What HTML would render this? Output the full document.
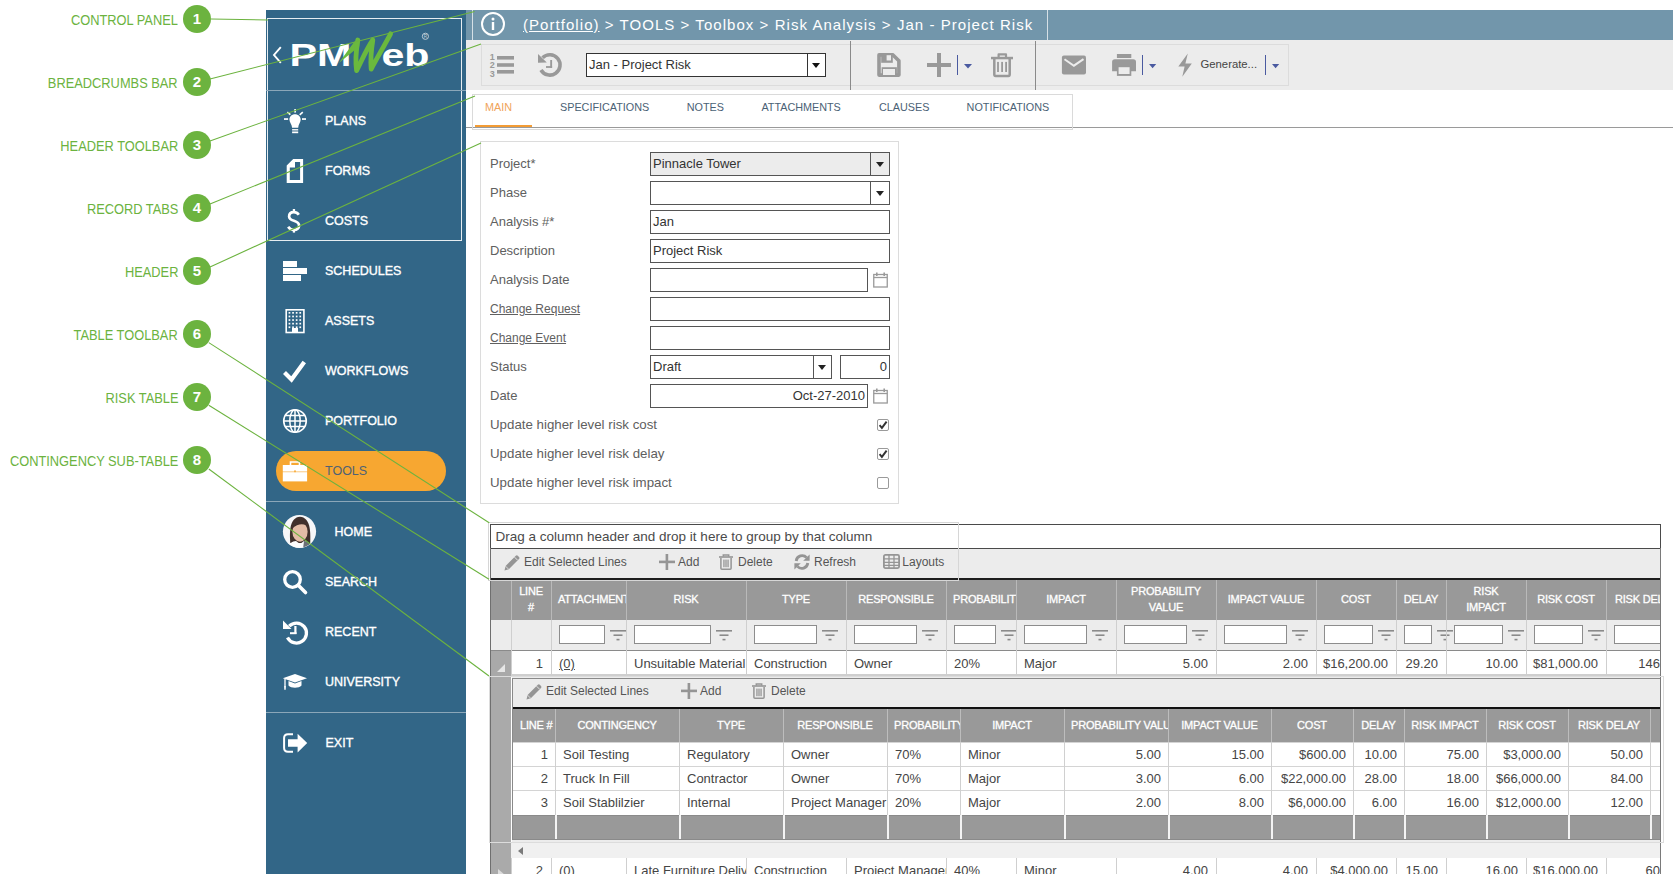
<!DOCTYPE html><html><head><meta charset="utf-8"><style>

*{box-sizing:border-box;margin:0;padding:0}
html,body{width:1676px;height:877px;overflow:hidden;background:#fff;font-family:"Liberation Sans", sans-serif;}
.a{position:absolute}
.lbl{position:absolute;right:1498px;font-size:14.5px;color:#6cb33f;white-space:nowrap;transform:scaleX(.885);transform-origin:right center;line-height:16px}
.num{position:absolute;width:28px;height:28px;border-radius:50%;background:#6cb33f;color:#fff;font-weight:bold;font-size:15px;text-align:center;line-height:28px}
.sb{position:absolute;left:266px;top:10px;width:200px;height:864px;background:#326687}
.mi{position:absolute;left:325px;font-weight:normal;font-size:12.5px;color:#fff;-webkit-text-stroke:0.35px #fff;white-space:nowrap;line-height:14px}
.ic{position:absolute}
.fld{border:1px solid #555;font-size:13px;line-height:22px;color:#333;white-space:nowrap;overflow:hidden}
.ph{color:#fff;font-weight:normal;font-size:11px;letter-spacing:-0.2px;-webkit-text-stroke:0.3px #fff;text-align:center;white-space:nowrap;overflow:hidden;padding:0 7px}
.pc{font-size:13px;color:#454545;white-space:nowrap;overflow:hidden}

</style></head><body>
<div class="sb"></div>
<div class="a" style="left:267px;top:18px;width:195px;height:223px;border:1px solid #e6edf1"></div>
<div class="a" style="left:266px;top:90px;width:200px;height:1px;background:#8ba7b9"></div>
<div class="a" style="left:266px;top:501px;width:200px;height:1px;background:#8ba7b9"></div>
<div class="a" style="left:266px;top:712px;width:200px;height:1px;background:#8ba7b9"></div>
<svg class="a" style="left:266px;top:28px" width="180" height="50" viewBox="0 0 180 50">
<path d="M14.8 19.2 L8 27 L14.8 34.8" fill="none" stroke="#fff" stroke-width="1.9"/>
<text x="23.5" y="37.5" font-family="Liberation Sans" font-weight="bold" font-size="31" fill="#fff" textLength="62" lengthAdjust="spacingAndGlyphs">PM</text>
<text x="115.5" y="37.5" font-family="Liberation Sans" font-weight="bold" font-size="31" fill="#fff" textLength="48" lengthAdjust="spacingAndGlyphs">eb</text>
<path d="M72.6 35.2 L88.5 13.5 L93.5 11 L93.2 18.5 Z" fill="#6ab93e"/>
<path d="M91.8 12 C90.2 22 89.2 34 90.6 42.6 C95 34 101 20 106.8 12 C105.2 22 104.4 32 105.2 41 C110 32 118 18 124.6 5.8" fill="none" stroke="#6ab93e" stroke-width="4.8" stroke-linejoin="round" stroke-linecap="round"/>
<circle cx="159.4" cy="8.3" r="3.1" fill="none" stroke="#c9d5dd" stroke-width="0.9"/>
<text x="157.8" y="10" font-family="Liberation Sans" font-size="4.5" fill="#c9d5dd">R</text>
</svg>
<div class="mi" style="top:114.0px">PLANS</div>
<div class="mi" style="top:164.0px">FORMS</div>
<div class="mi" style="top:214.0px">COSTS</div>
<div class="mi" style="top:264.0px">SCHEDULES</div>
<div class="mi" style="top:314.0px">ASSETS</div>
<div class="mi" style="top:364.0px">WORKFLOWS</div>
<div class="mi" style="top:414.0px">PORTFOLIO</div>
<div class="a" style="left:276px;top:451px;width:170px;height:40px;border-radius:20px;background:#f7a731"></div>
<div class="mi" style="top:464px;font-weight:normal;color:#4e6275;-webkit-text-stroke:0">TOOLS</div>
<div class="mi" style="left:334.5px;top:524.5px">HOME</div>
<div class="mi" style="left:325px;top:574.5px">SEARCH</div>
<div class="mi" style="left:325px;top:624.5px">RECENT</div>
<div class="mi" style="left:325px;top:674.5px">UNIVERSITY</div>
<div class="mi" style="left:325.5px;top:735.5px">EXIT</div>
<div class="a" style="left:466px;top:10px;width:1207px;height:30px;background:#7296ab"></div>
<div class="a" style="left:472px;top:10px;width:1px;height:30px;background:#d6e0e6"></div>
<div class="a" style="left:1047px;top:10px;width:1px;height:30px;background:#d6e0e6"></div>
<svg class="a" style="left:480px;top:11px" width="26" height="26" viewBox="0 0 26 26"><circle cx="13" cy="13" r="11" fill="none" stroke="#fff" stroke-width="2"/><circle cx="13" cy="8" r="1.5" fill="#fff"/><rect x="11.8" y="11" width="2.4" height="8" fill="#fff"/></svg>
<div class="a" style="left:523px;top:16px;font-size:15px;letter-spacing:1.05px;color:#fff;white-space:nowrap;line-height:18px"><span style="text-decoration:underline">(Portfolio)</span> &gt; TOOLS &gt; Toolbox &gt; Risk Analysis &gt; Jan - Project Risk</div>
<div class="a" style="left:466px;top:40px;width:1207px;height:50px;background:#ececec"></div>
<div class="a" style="left:481px;top:44px;width:808px;height:42px;border:1px solid #dcdcdc"></div>
<div class="a" style="left:850px;top:41px;width:1px;height:49px;background:#8a8a8a"></div>
<div class="a" style="left:1035px;top:41px;width:1px;height:49px;background:#8a8a8a"></div>
<div class="a" style="left:466px;top:127px;width:1207px;height:1px;background:#9a9a9a"></div>
<div class="a" style="left:472px;top:94px;width:601px;height:36px;border:1px solid #dadada"></div>
<div class="a" style="left:475px;top:124.5px;width:57px;height:2.5px;background:#f39c35"></div>
<div class="a" style="left:485px;top:101px;font-size:10.8px;color:#f0a45a;white-space:nowrap;line-height:13px">MAIN</div>
<div class="a" style="left:560px;top:101px;font-size:10.8px;color:#4a6175;white-space:nowrap;line-height:13px">SPECIFICATIONS</div>
<div class="a" style="left:686.8px;top:101px;font-size:10.8px;color:#4a6175;white-space:nowrap;line-height:13px">NOTES</div>
<div class="a" style="left:761.4px;top:101px;font-size:10.8px;color:#4a6175;white-space:nowrap;line-height:13px">ATTACHMENTS</div>
<div class="a" style="left:879px;top:101px;font-size:10.8px;color:#4a6175;white-space:nowrap;line-height:13px">CLAUSES</div>
<div class="a" style="left:966.6px;top:101px;font-size:10.8px;color:#4a6175;white-space:nowrap;line-height:13px">NOTIFICATIONS</div>
<div class="a" style="left:480px;top:141px;width:419px;height:363px;border:1px solid #dcdcdc"></div>
<div class="a" style="left:490px;top:152px;height:24px;line-height:24px;font-size:13px;color:#606060;white-space:nowrap">Project*</div>
<div class="a" style="left:490px;top:181px;height:24px;line-height:24px;font-size:13px;color:#606060;white-space:nowrap">Phase</div>
<div class="a" style="left:490px;top:210px;height:24px;line-height:24px;font-size:13px;color:#606060;white-space:nowrap">Analysis #*</div>
<div class="a" style="left:490px;top:239px;height:24px;line-height:24px;font-size:13px;color:#606060;white-space:nowrap">Description</div>
<div class="a" style="left:490px;top:268px;height:24px;line-height:24px;font-size:13px;color:#606060;white-space:nowrap">Analysis Date</div>
<div class="a" style="left:490px;top:297px;height:24px;line-height:24px;font-size:12px;color:#606060;text-decoration:underline;white-space:nowrap">Change Request</div>
<div class="a" style="left:490px;top:326px;height:24px;line-height:24px;font-size:12px;color:#606060;text-decoration:underline;white-space:nowrap">Change Event</div>
<div class="a" style="left:490px;top:355px;height:24px;line-height:24px;font-size:13px;color:#606060;white-space:nowrap">Status</div>
<div class="a" style="left:490px;top:384px;height:24px;line-height:24px;font-size:13px;color:#606060;white-space:nowrap">Date</div>
<div class="a" style="left:490px;top:413px;height:24px;line-height:24px;font-size:13.3px;color:#606060;white-space:nowrap">Update higher level risk cost</div>
<div class="a" style="left:490px;top:442px;height:24px;line-height:24px;font-size:13.3px;color:#606060;white-space:nowrap">Update higher level risk delay</div>
<div class="a" style="left:490px;top:471px;height:24px;line-height:24px;font-size:13.3px;color:#606060;white-space:nowrap">Update higher level risk impact</div>
<div class="a fld" style="left:650px;top:152px;width:240px;height:24px;background:#ececec;padding-left:2px">Pinnacle Tower</div>
<div class="a" style="left:870px;top:152px;width:1px;height:24px;background:#555"></div>
<div class="a" style="left:875.5px;top:162px;width:0;height:0;border-left:4.5px solid transparent;border-right:4.5px solid transparent;border-top:5px solid #222"></div>
<div class="a fld" style="left:650px;top:181px;width:240px;height:24px;background:#fff;padding-left:2px"></div>
<div class="a" style="left:870px;top:181px;width:1px;height:24px;background:#555"></div>
<div class="a" style="left:875.5px;top:191px;width:0;height:0;border-left:4.5px solid transparent;border-right:4.5px solid transparent;border-top:5px solid #222"></div>
<div class="a fld" style="left:650px;top:210px;width:240px;height:24px;background:#fff;padding-left:2px">Jan</div>
<div class="a fld" style="left:650px;top:239px;width:240px;height:24px;background:#fff;padding-left:2px">Project Risk</div>
<div class="a fld" style="left:650px;top:268px;width:218px;height:24px;background:#fff;padding-left:2px"></div>
<svg class="a" style="left:873px;top:272px" width="15" height="16" viewBox="0 0 15 16"><rect x="0.75" y="2.5" width="13.5" height="12.5" fill="none" stroke="#9a9a9a" stroke-width="1.3"/><line x1="0.75" y1="5.5" x2="14.25" y2="5.5" stroke="#9a9a9a" stroke-width="1.3"/><rect x="3" y="0.5" width="1.6" height="3.5" fill="#9a9a9a"/><rect x="10.4" y="0.5" width="1.6" height="3.5" fill="#9a9a9a"/></svg>
<div class="a fld" style="left:650px;top:297px;width:240px;height:24px;background:#fff;padding-left:2px"></div>
<div class="a fld" style="left:650px;top:326px;width:240px;height:24px;background:#fff;padding-left:2px"></div>
<div class="a fld" style="left:650px;top:355px;width:182px;height:24px;background:#fff;padding-left:2px">Draft</div>
<div class="a" style="left:812.5px;top:355px;width:1px;height:24px;background:#555"></div>
<div class="a" style="left:817.75px;top:365px;width:0;height:0;border-left:4.5px solid transparent;border-right:4.5px solid transparent;border-top:5px solid #222"></div>
<div class="a fld" style="left:840px;top:355px;width:50px;height:24px;background:#fff;padding-right:2px;text-align:right">0</div>
<div class="a fld" style="left:650px;top:384px;width:218px;height:24px;background:#fff;padding-right:2px;text-align:right">Oct-27-2010</div>
<svg class="a" style="left:873px;top:388px" width="15" height="16" viewBox="0 0 15 16"><rect x="0.75" y="2.5" width="13.5" height="12.5" fill="none" stroke="#9a9a9a" stroke-width="1.3"/><line x1="0.75" y1="5.5" x2="14.25" y2="5.5" stroke="#9a9a9a" stroke-width="1.3"/><rect x="3" y="0.5" width="1.6" height="3.5" fill="#9a9a9a"/><rect x="10.4" y="0.5" width="1.6" height="3.5" fill="#9a9a9a"/></svg>
<div class="a" style="left:877px;top:419px;width:12px;height:12px;border:1px solid #9a9a9a;border-radius:2px;background:#fff"></div>
<svg class="a" style="left:877px;top:419px" width="12" height="12" viewBox="0 0 12 12"><path d="M2.6 6.2 L4.9 8.9 L9.6 2.6" fill="none" stroke="#333" stroke-width="1.9"/></svg>
<div class="a" style="left:877px;top:448px;width:12px;height:12px;border:1px solid #9a9a9a;border-radius:2px;background:#fff"></div>
<svg class="a" style="left:877px;top:448px" width="12" height="12" viewBox="0 0 12 12"><path d="M2.6 6.2 L4.9 8.9 L9.6 2.6" fill="none" stroke="#333" stroke-width="1.9"/></svg>
<div class="a" style="left:877px;top:477px;width:12px;height:12px;border:1px solid #9a9a9a;border-radius:2px;background:#fff"></div>
<div class="a" style="left:490px;top:523px;width:1171px;height:351px;overflow:hidden">
<div class="a" style="left:0;top:1px;width:1171px;height:25px;border:1px solid #4a4a4a;background:#fff"></div>
<div class="a" style="left:5.5px;top:1.5px;height:24px;line-height:24px;font-size:13.5px;color:#4a4a4a;white-space:nowrap">Drag a column header and drop it here to group by that column</div>
<div class="a" style="left:0;top:25.5px;width:1171px;height:30px;background:#ececec;border-left:1px solid #777;border-right:1px solid #777"></div>
<div class="a" style="left:0;top:55px;width:1171px;height:2px;background:#1e1e1e"></div>
<div class="a" style="left:0;top:57px;width:1171px;height:40px;background:#999"></div>
<div class="a" style="left:0;top:97px;width:1171px;height:31px;background:#ececec;border-bottom:1px solid #8a8a8a"></div>
<div class="a" style="left:0;top:128px;width:1171px;height:25px;background:#fff;border-bottom:2px solid #cfcfcf"></div>
<div class="a" style="left:0;top:153px;width:1171px;height:182px;background:#fff"></div>
<div class="a" style="left:0;top:335px;width:1171px;height:24px;background:#fff"></div>
<div class="a" style="left:0;top:128px;width:21px;height:25px;background:#a9a9a9"></div>
<div class="a" style="left:0;top:153px;width:21px;height:182px;background:#aaa"></div>
<div class="a" style="left:0;top:335px;width:21px;height:24px;background:#aaa"></div>
<svg class="a" style="left:6px;top:140px" width="10" height="10"><path d="M9 1 L9 9 L1 9 Z" fill="#e6e6e6"/></svg>
<svg class="a" style="left:7px;top:345px" width="10" height="12"><path d="M1 1 L8 7 L1 12 Z" fill="#dcdcdc"/></svg>
<div class="a" style="left:0;top:25px;width:1px;height:330px;background:#6f6f6f"></div>
<div class="a" style="left:21px;top:57px;width:1px;height:40px;background:#b9b9b9"></div>
<div class="a" style="left:21px;top:97px;width:1px;height:31px;background:#cfcfcf"></div>
<div class="a" style="left:21px;top:128px;width:1px;height:25px;background:#cfcfcf"></div>
<div class="a" style="left:21px;top:335px;width:1px;height:24px;background:#cfcfcf"></div>
<div class="a ph" style="left:21px;top:56px;width:40px;height:40px;padding-top:4px;line-height:16px">LINE<br>#</div>
<div class="a pc" style="left:21px;top:129px;width:40px;height:24px;line-height:24px;text-align:right;padding-right:8px">1</div>
<div class="a pc" style="left:21px;top:336px;width:40px;height:24px;line-height:24px;text-align:right;padding-right:8px">2</div>
<div class="a" style="left:61px;top:57px;width:1px;height:40px;background:#b9b9b9"></div>
<div class="a" style="left:61px;top:97px;width:1px;height:31px;background:#cfcfcf"></div>
<div class="a" style="left:61px;top:128px;width:1px;height:25px;background:#cfcfcf"></div>
<div class="a" style="left:61px;top:335px;width:1px;height:24px;background:#cfcfcf"></div>
<div class="a ph" style="left:61px;top:56px;width:75px;height:40px;line-height:40px">ATTACHMENT</div>
<div class="a" style="left:69px;top:102px;width:46px;height:19px;border:1px solid #8d8d8d;background:#fff"></div>
<svg class="a" style="left:119.5px;top:107px" width="16" height="11" viewBox="0 0 16 11"><rect x="0" y="0" width="16" height="1.6" fill="#8a8a8a"/><rect x="3.5" y="4.4" width="9" height="1.6" fill="#8a8a8a"/><rect x="6.5" y="8.8" width="3" height="1.6" fill="#8a8a8a"/></svg>
<div class="a pc" style="left:61px;top:129px;width:75px;height:24px;line-height:24px;padding-left:8px"><span style="text-decoration:underline">(0)</span></div>
<div class="a pc" style="left:61px;top:336px;width:75px;height:24px;line-height:24px;padding-left:8px"><span style="text-decoration:underline">(0)</span></div>
<div class="a" style="left:136px;top:57px;width:1px;height:40px;background:#b9b9b9"></div>
<div class="a" style="left:136px;top:97px;width:1px;height:31px;background:#cfcfcf"></div>
<div class="a" style="left:136px;top:128px;width:1px;height:25px;background:#cfcfcf"></div>
<div class="a" style="left:136px;top:335px;width:1px;height:24px;background:#cfcfcf"></div>
<div class="a ph" style="left:136px;top:56px;width:120px;height:40px;line-height:40px">RISK</div>
<div class="a" style="left:144px;top:102px;width:77px;height:19px;border:1px solid #8d8d8d;background:#fff"></div>
<svg class="a" style="left:225.5px;top:107px" width="16" height="11" viewBox="0 0 16 11"><rect x="0" y="0" width="16" height="1.6" fill="#8a8a8a"/><rect x="3.5" y="4.4" width="9" height="1.6" fill="#8a8a8a"/><rect x="6.5" y="8.8" width="3" height="1.6" fill="#8a8a8a"/></svg>
<div class="a pc" style="left:136px;top:129px;width:120px;height:24px;line-height:24px;padding-left:8px">Unsuitable Material</div>
<div class="a pc" style="left:136px;top:336px;width:120px;height:24px;line-height:24px;padding-left:8px">Late Furniture Delivery</div>
<div class="a" style="left:256px;top:57px;width:1px;height:40px;background:#b9b9b9"></div>
<div class="a" style="left:256px;top:97px;width:1px;height:31px;background:#cfcfcf"></div>
<div class="a" style="left:256px;top:128px;width:1px;height:25px;background:#cfcfcf"></div>
<div class="a" style="left:256px;top:335px;width:1px;height:24px;background:#cfcfcf"></div>
<div class="a ph" style="left:256px;top:56px;width:100px;height:40px;line-height:40px">TYPE</div>
<div class="a" style="left:264px;top:102px;width:63px;height:19px;border:1px solid #8d8d8d;background:#fff"></div>
<svg class="a" style="left:331.5px;top:107px" width="16" height="11" viewBox="0 0 16 11"><rect x="0" y="0" width="16" height="1.6" fill="#8a8a8a"/><rect x="3.5" y="4.4" width="9" height="1.6" fill="#8a8a8a"/><rect x="6.5" y="8.8" width="3" height="1.6" fill="#8a8a8a"/></svg>
<div class="a pc" style="left:256px;top:129px;width:100px;height:24px;line-height:24px;padding-left:8px">Construction</div>
<div class="a pc" style="left:256px;top:336px;width:100px;height:24px;line-height:24px;padding-left:8px">Construction</div>
<div class="a" style="left:356px;top:57px;width:1px;height:40px;background:#b9b9b9"></div>
<div class="a" style="left:356px;top:97px;width:1px;height:31px;background:#cfcfcf"></div>
<div class="a" style="left:356px;top:128px;width:1px;height:25px;background:#cfcfcf"></div>
<div class="a" style="left:356px;top:335px;width:1px;height:24px;background:#cfcfcf"></div>
<div class="a ph" style="left:356px;top:56px;width:100px;height:40px;line-height:40px">RESPONSIBLE</div>
<div class="a" style="left:364px;top:102px;width:63px;height:19px;border:1px solid #8d8d8d;background:#fff"></div>
<svg class="a" style="left:431.5px;top:107px" width="16" height="11" viewBox="0 0 16 11"><rect x="0" y="0" width="16" height="1.6" fill="#8a8a8a"/><rect x="3.5" y="4.4" width="9" height="1.6" fill="#8a8a8a"/><rect x="6.5" y="8.8" width="3" height="1.6" fill="#8a8a8a"/></svg>
<div class="a pc" style="left:356px;top:129px;width:100px;height:24px;line-height:24px;padding-left:8px">Owner</div>
<div class="a pc" style="left:356px;top:336px;width:100px;height:24px;line-height:24px;padding-left:8px">Project Manager</div>
<div class="a" style="left:456px;top:57px;width:1px;height:40px;background:#b9b9b9"></div>
<div class="a" style="left:456px;top:97px;width:1px;height:31px;background:#cfcfcf"></div>
<div class="a" style="left:456px;top:128px;width:1px;height:25px;background:#cfcfcf"></div>
<div class="a" style="left:456px;top:335px;width:1px;height:24px;background:#cfcfcf"></div>
<div class="a ph" style="left:456px;top:56px;width:70px;height:40px;line-height:40px">PROBABILITY</div>
<div class="a" style="left:464px;top:102px;width:42px;height:19px;border:1px solid #8d8d8d;background:#fff"></div>
<svg class="a" style="left:510.5px;top:107px" width="16" height="11" viewBox="0 0 16 11"><rect x="0" y="0" width="16" height="1.6" fill="#8a8a8a"/><rect x="3.5" y="4.4" width="9" height="1.6" fill="#8a8a8a"/><rect x="6.5" y="8.8" width="3" height="1.6" fill="#8a8a8a"/></svg>
<div class="a pc" style="left:456px;top:129px;width:70px;height:24px;line-height:24px;padding-left:8px">20%</div>
<div class="a pc" style="left:456px;top:336px;width:70px;height:24px;line-height:24px;padding-left:8px">40%</div>
<div class="a" style="left:526px;top:57px;width:1px;height:40px;background:#b9b9b9"></div>
<div class="a" style="left:526px;top:97px;width:1px;height:31px;background:#cfcfcf"></div>
<div class="a" style="left:526px;top:128px;width:1px;height:25px;background:#cfcfcf"></div>
<div class="a" style="left:526px;top:335px;width:1px;height:24px;background:#cfcfcf"></div>
<div class="a ph" style="left:526px;top:56px;width:100px;height:40px;line-height:40px">IMPACT</div>
<div class="a" style="left:534px;top:102px;width:63px;height:19px;border:1px solid #8d8d8d;background:#fff"></div>
<svg class="a" style="left:601.5px;top:107px" width="16" height="11" viewBox="0 0 16 11"><rect x="0" y="0" width="16" height="1.6" fill="#8a8a8a"/><rect x="3.5" y="4.4" width="9" height="1.6" fill="#8a8a8a"/><rect x="6.5" y="8.8" width="3" height="1.6" fill="#8a8a8a"/></svg>
<div class="a pc" style="left:526px;top:129px;width:100px;height:24px;line-height:24px;padding-left:8px">Major</div>
<div class="a pc" style="left:526px;top:336px;width:100px;height:24px;line-height:24px;padding-left:8px">Minor</div>
<div class="a" style="left:626px;top:57px;width:1px;height:40px;background:#b9b9b9"></div>
<div class="a" style="left:626px;top:97px;width:1px;height:31px;background:#cfcfcf"></div>
<div class="a" style="left:626px;top:128px;width:1px;height:25px;background:#cfcfcf"></div>
<div class="a" style="left:626px;top:335px;width:1px;height:24px;background:#cfcfcf"></div>
<div class="a ph" style="left:626px;top:56px;width:100px;height:40px;padding-top:4px;line-height:16px">PROBABILITY<br>VALUE</div>
<div class="a" style="left:634px;top:102px;width:63px;height:19px;border:1px solid #8d8d8d;background:#fff"></div>
<svg class="a" style="left:701.5px;top:107px" width="16" height="11" viewBox="0 0 16 11"><rect x="0" y="0" width="16" height="1.6" fill="#8a8a8a"/><rect x="3.5" y="4.4" width="9" height="1.6" fill="#8a8a8a"/><rect x="6.5" y="8.8" width="3" height="1.6" fill="#8a8a8a"/></svg>
<div class="a pc" style="left:626px;top:129px;width:100px;height:24px;line-height:24px;text-align:right;padding-right:8px">5.00</div>
<div class="a pc" style="left:626px;top:336px;width:100px;height:24px;line-height:24px;text-align:right;padding-right:8px">4.00</div>
<div class="a" style="left:726px;top:57px;width:1px;height:40px;background:#b9b9b9"></div>
<div class="a" style="left:726px;top:97px;width:1px;height:31px;background:#cfcfcf"></div>
<div class="a" style="left:726px;top:128px;width:1px;height:25px;background:#cfcfcf"></div>
<div class="a" style="left:726px;top:335px;width:1px;height:24px;background:#cfcfcf"></div>
<div class="a ph" style="left:726px;top:56px;width:100px;height:40px;line-height:40px">IMPACT VALUE</div>
<div class="a" style="left:734px;top:102px;width:63px;height:19px;border:1px solid #8d8d8d;background:#fff"></div>
<svg class="a" style="left:801.5px;top:107px" width="16" height="11" viewBox="0 0 16 11"><rect x="0" y="0" width="16" height="1.6" fill="#8a8a8a"/><rect x="3.5" y="4.4" width="9" height="1.6" fill="#8a8a8a"/><rect x="6.5" y="8.8" width="3" height="1.6" fill="#8a8a8a"/></svg>
<div class="a pc" style="left:726px;top:129px;width:100px;height:24px;line-height:24px;text-align:right;padding-right:8px">2.00</div>
<div class="a pc" style="left:726px;top:336px;width:100px;height:24px;line-height:24px;text-align:right;padding-right:8px">4.00</div>
<div class="a" style="left:826px;top:57px;width:1px;height:40px;background:#b9b9b9"></div>
<div class="a" style="left:826px;top:97px;width:1px;height:31px;background:#cfcfcf"></div>
<div class="a" style="left:826px;top:128px;width:1px;height:25px;background:#cfcfcf"></div>
<div class="a" style="left:826px;top:335px;width:1px;height:24px;background:#cfcfcf"></div>
<div class="a ph" style="left:826px;top:56px;width:80px;height:40px;line-height:40px">COST</div>
<div class="a" style="left:834px;top:102px;width:49px;height:19px;border:1px solid #8d8d8d;background:#fff"></div>
<svg class="a" style="left:887.5px;top:107px" width="16" height="11" viewBox="0 0 16 11"><rect x="0" y="0" width="16" height="1.6" fill="#8a8a8a"/><rect x="3.5" y="4.4" width="9" height="1.6" fill="#8a8a8a"/><rect x="6.5" y="8.8" width="3" height="1.6" fill="#8a8a8a"/></svg>
<div class="a pc" style="left:826px;top:129px;width:80px;height:24px;line-height:24px;text-align:right;padding-right:8px">$16,200.00</div>
<div class="a pc" style="left:826px;top:336px;width:80px;height:24px;line-height:24px;text-align:right;padding-right:8px">$4,000.00</div>
<div class="a" style="left:906px;top:57px;width:1px;height:40px;background:#b9b9b9"></div>
<div class="a" style="left:906px;top:97px;width:1px;height:31px;background:#cfcfcf"></div>
<div class="a" style="left:906px;top:128px;width:1px;height:25px;background:#cfcfcf"></div>
<div class="a" style="left:906px;top:335px;width:1px;height:24px;background:#cfcfcf"></div>
<div class="a ph" style="left:906px;top:56px;width:50px;height:40px;line-height:40px">DELAY</div>
<div class="a" style="left:914px;top:102px;width:28px;height:19px;border:1px solid #8d8d8d;background:#fff"></div>
<svg class="a" style="left:946.5px;top:107px" width="16" height="11" viewBox="0 0 16 11"><rect x="0" y="0" width="16" height="1.6" fill="#8a8a8a"/><rect x="3.5" y="4.4" width="9" height="1.6" fill="#8a8a8a"/><rect x="6.5" y="8.8" width="3" height="1.6" fill="#8a8a8a"/></svg>
<div class="a pc" style="left:906px;top:129px;width:50px;height:24px;line-height:24px;text-align:right;padding-right:8px">29.20</div>
<div class="a pc" style="left:906px;top:336px;width:50px;height:24px;line-height:24px;text-align:right;padding-right:8px">15.00</div>
<div class="a" style="left:956px;top:57px;width:1px;height:40px;background:#b9b9b9"></div>
<div class="a" style="left:956px;top:97px;width:1px;height:31px;background:#cfcfcf"></div>
<div class="a" style="left:956px;top:128px;width:1px;height:25px;background:#cfcfcf"></div>
<div class="a" style="left:956px;top:335px;width:1px;height:24px;background:#cfcfcf"></div>
<div class="a ph" style="left:956px;top:56px;width:80px;height:40px;padding-top:4px;line-height:16px">RISK<br>IMPACT</div>
<div class="a" style="left:964px;top:102px;width:49px;height:19px;border:1px solid #8d8d8d;background:#fff"></div>
<svg class="a" style="left:1017.5px;top:107px" width="16" height="11" viewBox="0 0 16 11"><rect x="0" y="0" width="16" height="1.6" fill="#8a8a8a"/><rect x="3.5" y="4.4" width="9" height="1.6" fill="#8a8a8a"/><rect x="6.5" y="8.8" width="3" height="1.6" fill="#8a8a8a"/></svg>
<div class="a pc" style="left:956px;top:129px;width:80px;height:24px;line-height:24px;text-align:right;padding-right:8px">10.00</div>
<div class="a pc" style="left:956px;top:336px;width:80px;height:24px;line-height:24px;text-align:right;padding-right:8px">16.00</div>
<div class="a" style="left:1036px;top:57px;width:1px;height:40px;background:#b9b9b9"></div>
<div class="a" style="left:1036px;top:97px;width:1px;height:31px;background:#cfcfcf"></div>
<div class="a" style="left:1036px;top:128px;width:1px;height:25px;background:#cfcfcf"></div>
<div class="a" style="left:1036px;top:335px;width:1px;height:24px;background:#cfcfcf"></div>
<div class="a ph" style="left:1036px;top:56px;width:80px;height:40px;line-height:40px">RISK COST</div>
<div class="a" style="left:1044px;top:102px;width:49px;height:19px;border:1px solid #8d8d8d;background:#fff"></div>
<svg class="a" style="left:1097.5px;top:107px" width="16" height="11" viewBox="0 0 16 11"><rect x="0" y="0" width="16" height="1.6" fill="#8a8a8a"/><rect x="3.5" y="4.4" width="9" height="1.6" fill="#8a8a8a"/><rect x="6.5" y="8.8" width="3" height="1.6" fill="#8a8a8a"/></svg>
<div class="a pc" style="left:1036px;top:129px;width:80px;height:24px;line-height:24px;text-align:right;padding-right:8px">$81,000.00</div>
<div class="a pc" style="left:1036px;top:336px;width:80px;height:24px;line-height:24px;text-align:right;padding-right:8px">$16,000.00</div>
<div class="a" style="left:1116px;top:57px;width:1px;height:40px;background:#b9b9b9"></div>
<div class="a" style="left:1116px;top:97px;width:1px;height:31px;background:#cfcfcf"></div>
<div class="a" style="left:1116px;top:128px;width:1px;height:25px;background:#cfcfcf"></div>
<div class="a" style="left:1116px;top:335px;width:1px;height:24px;background:#cfcfcf"></div>
<div class="a ph" style="left:1116px;top:56px;width:80px;height:40px;line-height:40px">RISK DELAY</div>
<div class="a" style="left:1124px;top:102px;width:49px;height:19px;border:1px solid #8d8d8d;background:#fff"></div>
<svg class="a" style="left:1177.5px;top:107px" width="16" height="11" viewBox="0 0 16 11"><rect x="0" y="0" width="16" height="1.6" fill="#8a8a8a"/><rect x="3.5" y="4.4" width="9" height="1.6" fill="#8a8a8a"/><rect x="6.5" y="8.8" width="3" height="1.6" fill="#8a8a8a"/></svg>
<div class="a pc" style="left:1116px;top:129px;width:80px;height:24px;line-height:24px;text-align:right;padding-right:8px">146.00</div>
<div class="a pc" style="left:1116px;top:336px;width:80px;height:24px;line-height:24px;text-align:right;padding-right:8px">60.00</div>
<svg class="a" style="left:13.800000000000011px;top:31px" width="16" height="17" viewBox="0 0 16 17"><path d="M0.5 16.5 L1.6 12 L11.8 1.8 Q12.8 0.8 13.8 1.8 L15 3 Q16 4 15 5 L4.8 15.2 Z" fill="#959595"/><path d="M10.6 3.2 L13.6 6.2" stroke="#ececec" stroke-width="0.9"/><path d="M1.6 12.2 L4.6 15.2" stroke="#ececec" stroke-width="0.8"/></svg>
<div class="a" style="left:34px;top:24px;height:30px;line-height:30px;font-size:12px;color:#555;white-space:nowrap">Edit Selected Lines</div>
<svg class="a" style="left:169px;top:31px" width="16" height="16" viewBox="0 0 16 16"><rect x="6.6" y="0" width="2.6" height="16" fill="#959595"/><rect x="0" y="6.6" width="16" height="2.6" fill="#959595"/></svg>
<div class="a" style="left:188px;top:24px;height:30px;line-height:30px;font-size:12px;color:#555;white-space:nowrap">Add</div>
<svg class="a" style="left:229px;top:31px" width="14" height="16" viewBox="0 0 14 16"><path d="M4.3 2.6 V1 H9.7 V2.6" fill="none" stroke="#959595" stroke-width="1.5"/><rect x="0" y="2.2" width="14" height="1.6" fill="#959595"/><path d="M1.9 4 V14.2 Q1.9 15.2 2.9 15.2 H11.1 Q12.1 15.2 12.1 14.2 V4" fill="none" stroke="#959595" stroke-width="1.5"/><rect x="4.3" y="5.6" width="1.3" height="7.6" fill="#959595"/><rect x="6.35" y="5.6" width="1.3" height="7.6" fill="#959595"/><rect x="8.4" y="5.6" width="1.3" height="7.6" fill="#959595"/></svg>
<div class="a" style="left:248px;top:24px;height:30px;line-height:30px;font-size:12px;color:#555;white-space:nowrap">Delete</div>
<svg class="a" style="left:304px;top:31px" width="16" height="16" viewBox="0 0 16 16"><path d="M2.2 7 A6 6 0 0 1 12.6 3.6" fill="none" stroke="#959595" stroke-width="2.8"/><path d="M15.6 0.4 L15.6 6.8 L9.2 6.8 Z" fill="#959595"/><path d="M13.8 9 A6 6 0 0 1 3.4 12.4" fill="none" stroke="#959595" stroke-width="2.8"/><path d="M0.4 15.6 L0.4 9.2 L6.8 9.2 Z" fill="#959595"/></svg>
<div class="a" style="left:324px;top:24px;height:30px;line-height:30px;font-size:12px;color:#555;white-space:nowrap">Refresh</div>
<svg class="a" style="left:392.79999999999995px;top:31px" width="17" height="15" viewBox="0 0 17 15"><rect x="0.9" y="0.9" width="15.2" height="13.2" rx="1.5" fill="none" stroke="#959595" stroke-width="1.8"/><path d="M0.9 4.9 H16.1 M0.9 8.4 H16.1 M0.9 11.4 H16.1 M6 0.9 V14.1 M11 0.9 V14.1" stroke="#959595" stroke-width="1.3"/></svg>
<div class="a" style="left:412.29999999999995px;top:24px;height:30px;line-height:30px;font-size:12px;color:#555;white-space:nowrap">Layouts</div>
<div class="a" style="left:21px;top:153px;width:1150px;height:182px;background:#ececec"></div>
<div class="a" style="left:21px;top:153px;width:1px;height:182px;background:#fff"></div>
<div class="a" style="left:22px;top:154.5px;width:1149px;height:162.5px;border:1px solid #8a8a8a;background:#fff"></div>
<div class="a" style="left:23px;top:155.5px;width:1147px;height:28.5px;background:#ececec"></div>
<div class="a" style="left:23px;top:184px;width:1147px;height:1.5px;background:#111"></div>
<div class="a" style="left:23px;top:185.5px;width:1147px;height:33.5px;background:#999"></div>
<div class="a" style="left:23px;top:219px;width:1147px;height:24px;border-top:1px solid #d4d4d4;background:#fff"></div>
<div class="a" style="left:23px;top:243px;width:1147px;height:24px;border-top:1px solid #d4d4d4;background:#fff"></div>
<div class="a" style="left:23px;top:267px;width:1147px;height:24px;border-top:1px solid #d4d4d4;background:#fff"></div>
<div class="a" style="left:23px;top:291.5px;width:1147px;height:24.5px;background:#999;border-top:1px solid #8a8a8a"></div>
<svg class="a" style="left:36px;top:159.5px" width="16" height="17" viewBox="0 0 16 17"><path d="M0.5 16.5 L1.6 12 L11.8 1.8 Q12.8 0.8 13.8 1.8 L15 3 Q16 4 15 5 L4.8 15.2 Z" fill="#959595"/><path d="M10.6 3.2 L13.6 6.2" stroke="#ececec" stroke-width="0.9"/><path d="M1.6 12.2 L4.6 15.2" stroke="#ececec" stroke-width="0.8"/></svg>
<div class="a" style="left:56px;top:153.5px;height:29px;line-height:29px;font-size:12px;color:#555;white-space:nowrap">Edit Selected Lines</div>
<svg class="a" style="left:191px;top:159.5px" width="16" height="16" viewBox="0 0 16 16"><rect x="6.6" y="0" width="2.6" height="16" fill="#959595"/><rect x="0" y="6.6" width="16" height="2.6" fill="#959595"/></svg>
<div class="a" style="left:210px;top:153.5px;height:29px;line-height:29px;font-size:12px;color:#555;white-space:nowrap">Add</div>
<svg class="a" style="left:262px;top:159.5px" width="14" height="16" viewBox="0 0 14 16"><path d="M4.3 2.6 V1 H9.7 V2.6" fill="none" stroke="#959595" stroke-width="1.5"/><rect x="0" y="2.2" width="14" height="1.6" fill="#959595"/><path d="M1.9 4 V14.2 Q1.9 15.2 2.9 15.2 H11.1 Q12.1 15.2 12.1 14.2 V4" fill="none" stroke="#959595" stroke-width="1.5"/><rect x="4.3" y="5.6" width="1.3" height="7.6" fill="#959595"/><rect x="6.35" y="5.6" width="1.3" height="7.6" fill="#959595"/><rect x="8.4" y="5.6" width="1.3" height="7.6" fill="#959595"/></svg>
<div class="a" style="left:281px;top:153.5px;height:29px;line-height:29px;font-size:12px;color:#555;white-space:nowrap">Delete</div>
<div class="a ph" style="left:23px;top:185.5px;width:42px;height:33.5px;line-height:33.5px">LINE #</div>
<div class="a pc" style="left:23px;top:219.5px;width:42px;height:24px;line-height:24px;text-align:right;padding-right:7px">1</div>
<div class="a pc" style="left:23px;top:243.5px;width:42px;height:24px;line-height:24px;text-align:right;padding-right:7px">2</div>
<div class="a pc" style="left:23px;top:267.5px;width:42px;height:24px;line-height:24px;text-align:right;padding-right:7px">3</div>
<div class="a" style="left:65px;top:185.5px;width:1px;height:33.5px;background:#bdbdbd"></div>
<div class="a" style="left:65px;top:219px;width:1px;height:72.5px;background:#d0d0d0"></div>
<div class="a" style="left:65px;top:291.5px;width:1.5px;height:24.5px;background:#f4f4f4"></div>
<div class="a ph" style="left:65px;top:185.5px;width:124px;height:33.5px;line-height:33.5px">CONTINGENCY</div>
<div class="a pc" style="left:65px;top:219.5px;width:124px;height:24px;line-height:24px;padding-left:8px">Soil Testing</div>
<div class="a pc" style="left:65px;top:243.5px;width:124px;height:24px;line-height:24px;padding-left:8px">Truck In Fill</div>
<div class="a pc" style="left:65px;top:267.5px;width:124px;height:24px;line-height:24px;padding-left:8px">Soil Stablilzier</div>
<div class="a" style="left:189px;top:185.5px;width:1px;height:33.5px;background:#bdbdbd"></div>
<div class="a" style="left:189px;top:219px;width:1px;height:72.5px;background:#d0d0d0"></div>
<div class="a" style="left:189px;top:291.5px;width:1.5px;height:24.5px;background:#f4f4f4"></div>
<div class="a ph" style="left:189px;top:185.5px;width:104px;height:33.5px;line-height:33.5px">TYPE</div>
<div class="a pc" style="left:189px;top:219.5px;width:104px;height:24px;line-height:24px;padding-left:8px">Regulatory</div>
<div class="a pc" style="left:189px;top:243.5px;width:104px;height:24px;line-height:24px;padding-left:8px">Contractor</div>
<div class="a pc" style="left:189px;top:267.5px;width:104px;height:24px;line-height:24px;padding-left:8px">Internal</div>
<div class="a" style="left:293px;top:185.5px;width:1px;height:33.5px;background:#bdbdbd"></div>
<div class="a" style="left:293px;top:219px;width:1px;height:72.5px;background:#d0d0d0"></div>
<div class="a" style="left:293px;top:291.5px;width:1.5px;height:24.5px;background:#f4f4f4"></div>
<div class="a ph" style="left:293px;top:185.5px;width:104px;height:33.5px;line-height:33.5px">RESPONSIBLE</div>
<div class="a pc" style="left:293px;top:219.5px;width:104px;height:24px;line-height:24px;padding-left:8px">Owner</div>
<div class="a pc" style="left:293px;top:243.5px;width:104px;height:24px;line-height:24px;padding-left:8px">Owner</div>
<div class="a pc" style="left:293px;top:267.5px;width:104px;height:24px;line-height:24px;padding-left:8px">Project Manager</div>
<div class="a" style="left:397px;top:185.5px;width:1px;height:33.5px;background:#bdbdbd"></div>
<div class="a" style="left:397px;top:219px;width:1px;height:72.5px;background:#d0d0d0"></div>
<div class="a" style="left:397px;top:291.5px;width:1.5px;height:24.5px;background:#f4f4f4"></div>
<div class="a ph" style="left:397px;top:185.5px;width:73px;height:33.5px;line-height:33.5px">PROBABILITY</div>
<div class="a pc" style="left:397px;top:219.5px;width:73px;height:24px;line-height:24px;padding-left:8px">70%</div>
<div class="a pc" style="left:397px;top:243.5px;width:73px;height:24px;line-height:24px;padding-left:8px">70%</div>
<div class="a pc" style="left:397px;top:267.5px;width:73px;height:24px;line-height:24px;padding-left:8px">20%</div>
<div class="a" style="left:470px;top:185.5px;width:1px;height:33.5px;background:#bdbdbd"></div>
<div class="a" style="left:470px;top:219px;width:1px;height:72.5px;background:#d0d0d0"></div>
<div class="a" style="left:470px;top:291.5px;width:1.5px;height:24.5px;background:#f4f4f4"></div>
<div class="a ph" style="left:470px;top:185.5px;width:104px;height:33.5px;line-height:33.5px">IMPACT</div>
<div class="a pc" style="left:470px;top:219.5px;width:104px;height:24px;line-height:24px;padding-left:8px">Minor</div>
<div class="a pc" style="left:470px;top:243.5px;width:104px;height:24px;line-height:24px;padding-left:8px">Major</div>
<div class="a pc" style="left:470px;top:267.5px;width:104px;height:24px;line-height:24px;padding-left:8px">Major</div>
<div class="a" style="left:574px;top:185.5px;width:1px;height:33.5px;background:#bdbdbd"></div>
<div class="a" style="left:574px;top:219px;width:1px;height:72.5px;background:#d0d0d0"></div>
<div class="a" style="left:574px;top:291.5px;width:1.5px;height:24.5px;background:#f4f4f4"></div>
<div class="a ph" style="left:574px;top:185.5px;width:104px;height:33.5px;line-height:33.5px">PROBABILITY VALUE</div>
<div class="a pc" style="left:574px;top:219.5px;width:104px;height:24px;line-height:24px;text-align:right;padding-right:7px">5.00</div>
<div class="a pc" style="left:574px;top:243.5px;width:104px;height:24px;line-height:24px;text-align:right;padding-right:7px">3.00</div>
<div class="a pc" style="left:574px;top:267.5px;width:104px;height:24px;line-height:24px;text-align:right;padding-right:7px">2.00</div>
<div class="a" style="left:678px;top:185.5px;width:1px;height:33.5px;background:#bdbdbd"></div>
<div class="a" style="left:678px;top:219px;width:1px;height:72.5px;background:#d0d0d0"></div>
<div class="a" style="left:678px;top:291.5px;width:1.5px;height:24.5px;background:#f4f4f4"></div>
<div class="a ph" style="left:678px;top:185.5px;width:103px;height:33.5px;line-height:33.5px">IMPACT VALUE</div>
<div class="a pc" style="left:678px;top:219.5px;width:103px;height:24px;line-height:24px;text-align:right;padding-right:7px">15.00</div>
<div class="a pc" style="left:678px;top:243.5px;width:103px;height:24px;line-height:24px;text-align:right;padding-right:7px">6.00</div>
<div class="a pc" style="left:678px;top:267.5px;width:103px;height:24px;line-height:24px;text-align:right;padding-right:7px">8.00</div>
<div class="a" style="left:781px;top:185.5px;width:1px;height:33.5px;background:#bdbdbd"></div>
<div class="a" style="left:781px;top:219px;width:1px;height:72.5px;background:#d0d0d0"></div>
<div class="a" style="left:781px;top:291.5px;width:1.5px;height:24.5px;background:#f4f4f4"></div>
<div class="a ph" style="left:781px;top:185.5px;width:82px;height:33.5px;line-height:33.5px">COST</div>
<div class="a pc" style="left:781px;top:219.5px;width:82px;height:24px;line-height:24px;text-align:right;padding-right:7px">$600.00</div>
<div class="a pc" style="left:781px;top:243.5px;width:82px;height:24px;line-height:24px;text-align:right;padding-right:7px">$22,000.00</div>
<div class="a pc" style="left:781px;top:267.5px;width:82px;height:24px;line-height:24px;text-align:right;padding-right:7px">$6,000.00</div>
<div class="a" style="left:863px;top:185.5px;width:1px;height:33.5px;background:#bdbdbd"></div>
<div class="a" style="left:863px;top:219px;width:1px;height:72.5px;background:#d0d0d0"></div>
<div class="a" style="left:863px;top:291.5px;width:1.5px;height:24.5px;background:#f4f4f4"></div>
<div class="a ph" style="left:863px;top:185.5px;width:51px;height:33.5px;line-height:33.5px">DELAY</div>
<div class="a pc" style="left:863px;top:219.5px;width:51px;height:24px;line-height:24px;text-align:right;padding-right:7px">10.00</div>
<div class="a pc" style="left:863px;top:243.5px;width:51px;height:24px;line-height:24px;text-align:right;padding-right:7px">28.00</div>
<div class="a pc" style="left:863px;top:267.5px;width:51px;height:24px;line-height:24px;text-align:right;padding-right:7px">6.00</div>
<div class="a" style="left:914px;top:185.5px;width:1px;height:33.5px;background:#bdbdbd"></div>
<div class="a" style="left:914px;top:219px;width:1px;height:72.5px;background:#d0d0d0"></div>
<div class="a" style="left:914px;top:291.5px;width:1.5px;height:24.5px;background:#f4f4f4"></div>
<div class="a ph" style="left:914px;top:185.5px;width:82px;height:33.5px;line-height:33.5px">RISK IMPACT</div>
<div class="a pc" style="left:914px;top:219.5px;width:82px;height:24px;line-height:24px;text-align:right;padding-right:7px">75.00</div>
<div class="a pc" style="left:914px;top:243.5px;width:82px;height:24px;line-height:24px;text-align:right;padding-right:7px">18.00</div>
<div class="a pc" style="left:914px;top:267.5px;width:82px;height:24px;line-height:24px;text-align:right;padding-right:7px">16.00</div>
<div class="a" style="left:996px;top:185.5px;width:1px;height:33.5px;background:#bdbdbd"></div>
<div class="a" style="left:996px;top:219px;width:1px;height:72.5px;background:#d0d0d0"></div>
<div class="a" style="left:996px;top:291.5px;width:1.5px;height:24.5px;background:#f4f4f4"></div>
<div class="a ph" style="left:996px;top:185.5px;width:82px;height:33.5px;line-height:33.5px">RISK COST</div>
<div class="a pc" style="left:996px;top:219.5px;width:82px;height:24px;line-height:24px;text-align:right;padding-right:7px">$3,000.00</div>
<div class="a pc" style="left:996px;top:243.5px;width:82px;height:24px;line-height:24px;text-align:right;padding-right:7px">$66,000.00</div>
<div class="a pc" style="left:996px;top:267.5px;width:82px;height:24px;line-height:24px;text-align:right;padding-right:7px">$12,000.00</div>
<div class="a" style="left:1078px;top:185.5px;width:1px;height:33.5px;background:#bdbdbd"></div>
<div class="a" style="left:1078px;top:219px;width:1px;height:72.5px;background:#d0d0d0"></div>
<div class="a" style="left:1078px;top:291.5px;width:1.5px;height:24.5px;background:#f4f4f4"></div>
<div class="a ph" style="left:1078px;top:185.5px;width:82px;height:33.5px;line-height:33.5px">RISK DELAY</div>
<div class="a pc" style="left:1078px;top:219.5px;width:82px;height:24px;line-height:24px;text-align:right;padding-right:7px">50.00</div>
<div class="a pc" style="left:1078px;top:243.5px;width:82px;height:24px;line-height:24px;text-align:right;padding-right:7px">84.00</div>
<div class="a pc" style="left:1078px;top:267.5px;width:82px;height:24px;line-height:24px;text-align:right;padding-right:7px">12.00</div>
<div class="a" style="left:1160px;top:185.5px;width:1px;height:33.5px;background:#bdbdbd"></div>
<div class="a" style="left:1160px;top:219px;width:1px;height:72.5px;background:#d0d0d0"></div>
<div class="a" style="left:1160px;top:291.5px;width:1.5px;height:24.5px;background:#f4f4f4"></div>
<div class="a pc" style="left:1160px;top:219.5px;width:11px;height:24px;line-height:24px;padding-left:8px"></div>
<div class="a pc" style="left:1160px;top:243.5px;width:11px;height:24px;line-height:24px;padding-left:8px"></div>
<div class="a pc" style="left:1160px;top:267.5px;width:11px;height:24px;line-height:24px;padding-left:8px"></div>
<div class="a" style="left:21px;top:320px;width:1150px;height:15px;background:#f0f0f0"></div>
<svg class="a" style="left:28px;top:323.5px" width="6" height="8"><path d="M5 0 L0 4 L5 8 Z" fill="#7a7a7a"/></svg>
</div>
<div class="a" style="left:1660px;top:548px;width:1px;height:326px;background:#7a7a7a"></div>
<div class="a" style="left:488px;top:522px;width:471px;height:59px;border:1px solid #d6d6d6"></div>
<div class="a" style="left:488.5px;top:676px;width:1175px;height:167px;border:1px solid #dcdcdc"></div>
<svg class="a" style="left:488px;top:51px" width="28" height="28" viewBox="488 51 28 28">
<text x="489.7" y="59.8" font-family="Liberation Sans" font-weight="bold" font-size="9" fill="#999">1</text>
<text x="489.7" y="68.3" font-family="Liberation Sans" font-weight="bold" font-size="9" fill="#999">2</text>
<text x="489.7" y="76.9" font-family="Liberation Sans" font-weight="bold" font-size="9" fill="#999">3</text>
<rect x="497" y="56" width="17" height="3.6" fill="#999"/><rect x="497" y="63.2" width="17" height="3.6" fill="#999"/><rect x="497" y="70" width="17" height="3.6" fill="#999"/></svg>
<svg class="a" style="left:535px;top:50px" width="30" height="30" viewBox="535 50 30 30">
<path d="M542.6 57.7 A10.2 10.2 0 1 1 541 70" fill="none" stroke="#999" stroke-width="3.6"/>
<path d="M538 53.9 L538 62.8 L546.8 62.6 Z" fill="#999"/>
<rect x="550.2" y="60" width="1.9" height="7.9" fill="#999"/><rect x="546" y="66.1" width="6.1" height="1.8" fill="#999"/></svg>
<div class="a fld" style="left:586px;top:53px;width:240px;height:24px;padding-left:2px;background:#fff;border-color:#333">Jan - Project Risk</div>
<div class="a" style="left:806.5px;top:53px;width:1px;height:24px;background:#333"></div>
<div class="a" style="left:812px;top:63px;width:0;height:0;border-left:4.5px solid transparent;border-right:4.5px solid transparent;border-top:5px solid #111"></div>
<svg class="a" style="left:876px;top:52px" width="26" height="26" viewBox="876 52 26 26">
<path d="M879 54.9 H893 L898.9 60.8 V75.1 H879 Z" fill="none" stroke="#999" stroke-width="3.6" stroke-linejoin="round"/>
<rect x="881.2" y="53" width="11.6" height="9.8" fill="#999"/><rect x="886.6" y="55.2" width="4.4" height="5.3" fill="#ececec"/>
<rect x="881.6" y="67.2" width="15.3" height="9" fill="#999"/><rect x="883" y="69" width="12" height="6" fill="#ececec"/></svg>
<div class="a" style="left:937.1px;top:53px;width:4.1px;height:24px;background:#999"></div>
<div class="a" style="left:927px;top:63px;width:24px;height:4px;background:#999"></div>
<div class="a" style="left:956.8px;top:55px;width:1.4px;height:20px;background:#4a5aa0"></div>
<svg class="a" style="left:963.5px;top:63.8px" width="8" height="5" viewBox="0 0 8 5"><path d="M0 0 H8 L4 4.5 Z" fill="#4a5aa0"/></svg>
<svg class="a" style="left:990px;top:52px" width="24" height="26" viewBox="990 52 24 26">
<path d="M998.6 57.5 V54.4 H1006 V57.5" fill="none" stroke="#999" stroke-width="2.2" stroke-linejoin="round"/>
<rect x="991" y="56.8" width="22" height="2.5" fill="#999"/>
<path d="M994.3 59 V74.6 Q994.3 75.9 995.6 75.9 H1008.4 Q1009.7 75.9 1009.7 74.6 V59" fill="none" stroke="#999" stroke-width="2.5"/>
<rect x="997.1" y="61.9" width="1.8" height="10.1" fill="#999"/><rect x="1001.2" y="61.9" width="1.8" height="10.1" fill="#999"/><rect x="1005.2" y="61.9" width="1.8" height="10.1" fill="#999"/></svg>
<svg class="a" style="left:1060px;top:54px" width="28" height="22" viewBox="1060 54 28 22">
<rect x="1061.9" y="55.6" width="24.1" height="18.8" rx="2" fill="#999"/>
<path d="M1064.5 59.2 L1073.9 65.7 L1083.5 59.2" fill="none" stroke="#ececec" stroke-width="2"/></svg>
<svg class="a" style="left:1110px;top:52px" width="28" height="26" viewBox="1110 52 28 26">
<rect x="1116.9" y="54" width="14.4" height="4" fill="#999"/>
<path d="M1112.1 71.2 V62 Q1112.1 59.2 1114.9 59.2 H1133.2 Q1136 59.2 1136 62 V71.2 Z" fill="#999"/>
<rect x="1116.9" y="66.6" width="14.4" height="9.3" fill="#999"/><rect x="1118.6" y="67.2" width="11" height="6.8" fill="#ececec"/></svg>
<div class="a" style="left:1141.8px;top:55px;width:1.4px;height:20px;background:#4a5aa0"></div>
<svg class="a" style="left:1148.8px;top:63.8px" width="8" height="5" viewBox="0 0 8 5"><path d="M0 0 H7.2 L3.6 4.2 Z" fill="#4a5aa0"/></svg>
<svg class="a" style="left:1176px;top:52px" width="18" height="26" viewBox="1176 52 18 26"><path d="M1187.8 53.6 L1178.3 66.6 L1184.6 66.6 L1182.3 76.8 L1191.8 63.4 L1185.4 63.4 Z" fill="#999"/></svg>
<div class="a" style="left:1200.5px;top:57px;font-size:11.3px;color:#444;white-space:nowrap;line-height:14px">Generate...</div>
<div class="a" style="left:1264.7px;top:55px;width:1.4px;height:20px;background:#4a5aa0"></div>
<svg class="a" style="left:1271.8px;top:63.8px" width="8" height="5" viewBox="0 0 8 5"><path d="M0 0 H7.2 L3.6 4.2 Z" fill="#4a5aa0"/></svg>
<svg class="a" style="left:280px;top:106px" width="30" height="30" viewBox="280 106 30 30">
<path d="M292.1 127.8 C292 124.8 289.4 122.6 289.4 119.6 C289.4 116.4 292 114.2 295 114.2 C298 114.2 300.7 116.4 300.7 119.6 C300.7 122.6 298.2 124.8 298.2 127.8 Z" fill="#fff"/>
<rect x="292.1" y="129.1" width="6.1" height="1.3" fill="#fff"/><rect x="292.1" y="130.7" width="6.1" height="1.1" fill="#b9c9d4"/><rect x="292.1" y="132" width="6.1" height="1.2" fill="#fff"/>
<rect x="294.3" y="109" width="1.6" height="3.6" fill="#fff"/>
<rect x="284" y="118.2" width="4.1" height="1.7" fill="#fff"/><rect x="302" y="118.2" width="4" height="1.7" fill="#fff"/>
<path d="M287.3 112.1 L290.4 114.7 M302.8 112.1 L299.7 114.9" stroke="#fff" stroke-width="1.6"/></svg>
<svg class="a" style="left:284px;top:157px" width="22" height="28" viewBox="284 157 22 28">
<path d="M286.7 165.5 L293.2 159 H303.1 V183 H286.7 Z M289.8 167.4 V180 H300.1 V162.1 H295 V167.4 Z" fill="#fff" fill-rule="evenodd"/></svg>
<svg class="a" style="left:285px;top:207px" width="18" height="28" viewBox="285 207 18 28">
<path d="M298.8 214.8 C297.6 213 295.8 212.1 293.8 212.1 C290.8 212.1 289.1 214 289.1 216.4 C289.1 222 299.1 219.6 299.1 225.6 C299.1 228.2 297 230 294 230 C291.4 230 289.5 228.8 288.2 226.8" fill="none" stroke="#fff" stroke-width="2.7"/>
<rect x="292.8" y="209" width="2.3" height="4" fill="#fff"/><rect x="292.8" y="229" width="2.3" height="3.6" fill="#fff"/></svg>
<div class="a" style="left:282.8px;top:260.8px;width:14.6px;height:5.8px;background:#fff"></div>
<div class="a" style="left:282.8px;top:267.6px;width:24.3px;height:6.4px;background:#fff"></div>
<div class="a" style="left:282.8px;top:275.3px;width:18px;height:6px;background:#fff"></div>
<svg class="a" style="left:284px;top:308px" width="22" height="27" viewBox="284 308 22 27"><rect x="286.2" y="309.8" width="17.7" height="22.7" fill="none" stroke="#fff" stroke-width="1.6"/><rect x="288.6" y="312.0" width="1.7" height="1.7" fill="#fff"/><rect x="292.20000000000005" y="312.0" width="1.7" height="1.7" fill="#fff"/><rect x="295.8" y="312.0" width="1.7" height="1.7" fill="#fff"/><rect x="299.40000000000003" y="312.0" width="1.7" height="1.7" fill="#fff"/><rect x="288.6" y="315.6" width="1.7" height="1.7" fill="#fff"/><rect x="292.20000000000005" y="315.6" width="1.7" height="1.7" fill="#fff"/><rect x="295.8" y="315.6" width="1.7" height="1.7" fill="#fff"/><rect x="299.40000000000003" y="315.6" width="1.7" height="1.7" fill="#fff"/><rect x="288.6" y="319.2" width="1.7" height="1.7" fill="#fff"/><rect x="292.20000000000005" y="319.2" width="1.7" height="1.7" fill="#fff"/><rect x="295.8" y="319.2" width="1.7" height="1.7" fill="#fff"/><rect x="299.40000000000003" y="319.2" width="1.7" height="1.7" fill="#fff"/><rect x="288.6" y="322.8" width="1.7" height="1.7" fill="#fff"/><rect x="292.20000000000005" y="322.8" width="1.7" height="1.7" fill="#fff"/><rect x="295.8" y="322.8" width="1.7" height="1.7" fill="#fff"/><rect x="299.40000000000003" y="322.8" width="1.7" height="1.7" fill="#fff"/><rect x="288.6" y="326.4" width="1.7" height="1.7" fill="#fff"/><rect x="292.20000000000005" y="326.4" width="1.7" height="1.7" fill="#fff"/><rect x="295.8" y="326.4" width="1.7" height="1.7" fill="#fff"/><rect x="299.40000000000003" y="326.4" width="1.7" height="1.7" fill="#fff"/><rect x="292" y="328" width="6" height="5" fill="#fff"/></svg>
<svg class="a" style="left:281px;top:358px" width="28" height="27" viewBox="281 358 28 27"><path d="M284.5 372.5 L291.5 379.5 L304.3 362" fill="none" stroke="#fff" stroke-width="4.2"/></svg>
<svg class="a" style="left:281px;top:407px" width="28" height="28" viewBox="281 407 28 28">
<circle cx="295" cy="421" r="11.3" fill="none" stroke="#fff" stroke-width="1.6"/>
<ellipse cx="295" cy="421" rx="5.2" ry="11.3" fill="none" stroke="#fff" stroke-width="1.5"/>
<path d="M295 409.7 V432.3 M283.7 421 H306.3 M285.2 415.5 H304.8 M285.2 426.5 H304.8" stroke="#fff" stroke-width="1.5"/></svg>
<svg class="a" style="left:281px;top:459px" width="28" height="24" viewBox="281 459 28 24">
<path d="M290.5 465 V462 H299.5 V465" fill="none" stroke="#fff" stroke-width="1.6"/>
<rect x="282.8" y="465" width="24.3" height="6" fill="#fff"/><rect x="282.8" y="471" width="24.3" height="1.2" fill="#fcd9a6"/><rect x="282.8" y="472.2" width="24.3" height="9.2" fill="#fff"/>
<rect x="294.2" y="470.4" width="1.6" height="1.8" fill="#f7a731"/></svg>
<svg class="a" style="left:282px;top:514px" width="35" height="35" viewBox="282 514 35 35">
<defs><clipPath id="av"><circle cx="299.5" cy="531.5" r="16.3"/></clipPath></defs>
<circle cx="299.5" cy="531.5" r="16.6" fill="#f6f7f9"/>
<g clip-path="url(#av)">
<path d="M290.3 543 C289.3 531 289.8 517.5 300 516.8 C310.2 517.5 310.7 531 310.2 543 Z" fill="#40302c"/>
<ellipse cx="300" cy="531.8" rx="7.6" ry="10" fill="#e3bca6"/>
<path d="M291.8 529 C292.5 521 296.5 519.2 300.5 519.2 C305 519.2 308.2 522 308.8 528 C306 523.5 299 522 291.8 529 Z" fill="#40302c"/>
<path d="M287 549 C288 543.5 292 541.5 296 541 L300 544 L304 541 C308 541.5 311.5 543.5 312.5 549 Z" fill="#fdfdfd"/>
<path d="M304 541 C308 541.5 311.5 543.5 312.5 549 L303 549 Z" fill="#6b6f75"/>
</g></svg>
<svg class="a" style="left:281px;top:568px" width="28" height="28" viewBox="281 568 28 28"><circle cx="292.5" cy="579.5" r="7.8" fill="none" stroke="#fff" stroke-width="3.3"/><path d="M298.5 585.5 L305.5 592.5" stroke="#fff" stroke-width="3.6" stroke-linecap="round"/></svg>
<svg class="a" style="left:281px;top:618px" width="28" height="28" viewBox="281 618 28 28">
<path d="M289.2 626.2 A10 10 0 1 1 287.5 637.5" fill="none" stroke="#fff" stroke-width="3.3"/>
<path d="M283 620.5 L283 629 L291.5 629 Z" fill="#fff"/>
<rect x="294.3" y="626" width="2.2" height="8" fill="#fff"/><rect x="290" y="632.2" width="6.5" height="2" fill="#fff"/></svg>
<svg class="a" style="left:281px;top:672px" width="28" height="20" viewBox="281 672 28 20">
<path d="M282.8 678.3 L295 674 L307 678.3 L295 682.6 Z" fill="#fff"/>
<path d="M288.5 681 V685.5 C291 688.5 299 688.5 301.5 685.5 V681 L295 683.5 Z" fill="#fff"/>
<path d="M285 679 V689.8" stroke="#fff" stroke-width="1.3"/><path d="M284.2 686 L285 690.2 L285.8 686 Z" fill="#fff"/></svg>
<svg class="a" style="left:281px;top:731px" width="28" height="24" viewBox="281 731 28 24">
<path d="M293 734.2 H288 Q284.1 734.2 284.1 738 V748 Q284.1 751.8 288 751.8 H293" fill="none" stroke="#fff" stroke-width="2"/>
<path d="M288 739.3 H297.6 V733.8 L307.2 743 L297.6 752.4 V746.8 H288 Z" fill="#fff"/></svg>
<div class="lbl" style="top:12px">CONTROL PANEL</div>
<div class="num" style="left:183px;top:5px">1</div>
<div class="lbl" style="top:75px">BREADCRUMBS BAR</div>
<div class="num" style="left:183px;top:68px">2</div>
<div class="lbl" style="top:138px">HEADER TOOLBAR</div>
<div class="num" style="left:183px;top:131px">3</div>
<div class="lbl" style="top:201px">RECORD TABS</div>
<div class="num" style="left:183px;top:194px">4</div>
<div class="lbl" style="top:264px">HEADER</div>
<div class="num" style="left:183px;top:257px">5</div>
<div class="lbl" style="top:327px">TABLE TOOLBAR</div>
<div class="num" style="left:183px;top:320px">6</div>
<div class="lbl" style="top:390px">RISK TABLE</div>
<div class="num" style="left:183px;top:383px">7</div>
<div class="lbl" style="top:453px">CONTINGENCY SUB-TABLE</div>
<div class="num" style="left:183px;top:446px">8</div>
<svg class="a" style="left:0;top:0" width="1676" height="877">
<line x1="211" y1="19" x2="268" y2="20" stroke="#6cb33f" stroke-width="1.1"/>
<line x1="210" y1="79" x2="474.6" y2="11.5" stroke="#6cb33f" stroke-width="1.1"/>
<line x1="210" y1="141" x2="481" y2="44" stroke="#6cb33f" stroke-width="1.1"/>
<line x1="210" y1="204" x2="475" y2="96" stroke="#6cb33f" stroke-width="1.1"/>
<line x1="210" y1="267" x2="481" y2="143" stroke="#6cb33f" stroke-width="1.1"/>
<line x1="208.8" y1="342.6" x2="489.2" y2="522.8" stroke="#6cb33f" stroke-width="1.1"/>
<line x1="208.8" y1="405.2" x2="489" y2="579.3" stroke="#6cb33f" stroke-width="1.1"/>
<line x1="208.8" y1="469" x2="489" y2="676" stroke="#6cb33f" stroke-width="1.1"/>
</svg>
</body></html>
